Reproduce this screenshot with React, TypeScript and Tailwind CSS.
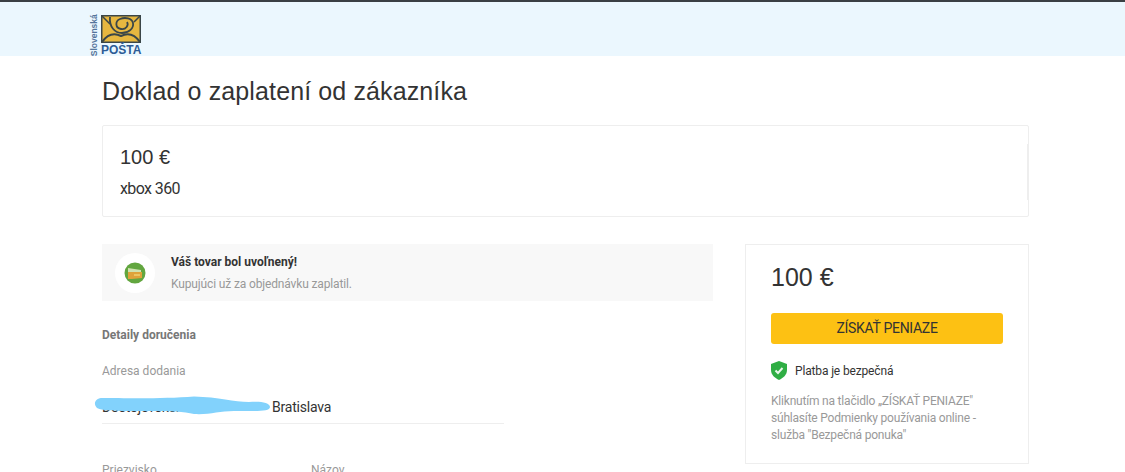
import React from 'react';

const roboto = { fontFamily: 'Roboto, sans-serif' };

const Logo: React.FC = () => (
  <div className="flex h-[42px] w-[52px] items-start gap-[1px]">
    <div className="flex h-[41px] w-[11px] items-center justify-center">
      <span className="-rotate-90 whitespace-nowrap font-['Liberation_Sans',sans-serif] text-[8.5px] font-bold leading-none text-[#55749a]">
        Slovenská
      </span>
    </div>
    <div className="flex w-[41px] flex-col items-start">
      <svg width="40" height="28" viewBox="0 0 40 28">
        <rect x="0.75" y="0.75" width="38.5" height="26.5" fill="#e6b740" stroke="#3a4648" strokeWidth="1.5" />
        <path d="M1 1 L9 9 M39 1 L33 7" stroke="#3a4648" strokeWidth="1.5" fill="none" />
        <path d="M1 27 C6 20 12 17 20 21 C28 17 34 20 39 27" stroke="#3a4648" strokeWidth="2" fill="none" />
        <path d="M9 2 C8 12 14 18 21 18 C28 18 33 13 32 8 C31 3 24 2 19 4 C14 6 14 13 20 14 C25 15 28 10 26 7" stroke="#3a4648" strokeWidth="1.8" fill="none" />
      </svg>
      <span className="mt-[1px] font-['Liberation_Sans',sans-serif] text-[12px] font-bold leading-[12px] text-[#2d5c96]">
        POŠTA
      </span>
    </div>
  </div>
);

const Shield: React.FC = () => (
  <svg width="16" height="19" viewBox="0 0 16 19">
    <path d="M8 0 L16 3 V9 C16 14 12 17 8 19 C4 17 0 14 0 9 V3 Z" fill="#2fae44" />
    <path d="M4.5 9.5 L7 12 L11.5 7" stroke="#e8f7ea" strokeWidth="2" fill="none" />
  </svg>
);

const WalletIcon: React.FC = () => (
  <div className="flex h-10 w-10 items-center justify-center rounded-full bg-white">
    <svg width="22" height="22" viewBox="0 0 22 22">
      <circle cx="11" cy="11" r="10.5" fill="#62a63f" />
      <path d="M4 6 L17 8 V10 H4 Z" fill="#cfe2b0" />
      <path d="M4 10 H18 V16 L8 17 H4 Z" fill="#dfa23a" />
      <path d="M10 13 H16" stroke="#f0d070" strokeWidth="1.5" />
    </svg>
  </div>
);

export default function App() {
  return (
    <div className="h-[472px] overflow-hidden bg-white" style={roboto}>
      {/* Header */}
      <div className="h-[56px] border-t-2 border-[#3a3f44] bg-[#ebf7fe] pl-[89px] pt-[13px]">
        <Logo />
      </div>

      <div className="mx-[102px] w-[927px]">
        <h1 className="mt-[17px] font-['Liberation_Sans',sans-serif] text-[25px] font-normal leading-[36px] tracking-[0.12px] text-[#333]">
          Doklad o zaplatení od zákazníka
        </h1>

        {/* Summary */}
        <div className="relative mt-[16px] h-[92px] rounded-[2px] border border-[#eeeeee] pl-[17px] pt-[17px]">
          <div className="font-['Liberation_Sans',sans-serif] text-[20px] leading-[28px] text-[#333]">100 €</div>
          <div className="mt-[7px] text-[16px] leading-[22px] tracking-[-0.6px] text-[#333]">xbox 360</div>
          <div className="absolute right-[-1px] top-[18px] h-[56px] w-[2px] bg-[#eeeeee]" />
        </div>

        <div className="mt-[27px] flex justify-between">
          {/* Left column */}
          <div className="w-[611px]">
            <div className="flex h-[57px] items-center gap-4 bg-[#f8f8f8] pl-[13px]">
              <WalletIcon />
              <div className="pt-[1px]">
                <div className="text-[12px] font-bold leading-[20px] text-[#333]">Váš tovar bol uvoľnený!</div>
                <div className="mt-[2px] text-[12px] leading-[20px] tracking-[-0.14px] text-[#999]">Kupujúci už za objednávku zaplatil.</div>
              </div>
            </div>

            <div className="mt-[24px] text-[12px] font-bold leading-[20px] text-[#777]">Detaily doručenia</div>
            <div className="mt-[16px] text-[12px] leading-[20px] text-[#999]">Adresa dodania</div>

            <div className="relative mt-[14px] h-[29px] w-[402px] border-b border-[#eeeeee] text-[14px] leading-[24px] tracking-[-0.2px] text-[#333]">
              <span className="absolute left-0 top-0">Dostojevského</span>
              <span className="absolute left-[170px] top-0">Bratislava</span>
              <svg className="absolute left-[-8px] top-[1px]" width="178" height="20" viewBox="0 0 178 20">
                <path
                  d="M7 2 C30 2 70 3 100 0.5 C125 1 140 6 155 6 C165 5 176 6 176 11 C176 16 160 15 140 15 C125 15 115 19 100 18 C85 14 60 15 40 15 C25 15 8 15 3 12 C-1 8 1 3 7 2 Z"
                  fill="#82d2fc"
                />
              </svg>
            </div>

            <div className="mt-[36px] flex text-[12px] leading-[20px] text-[#999]">
              <div className="w-[209px]">Priezvisko</div>
              <div>Názov</div>
            </div>
          </div>

          {/* Right column */}
          <div className="h-[220px] w-[284px] border border-[#eeeeee] px-[25px]">
            <div className="mt-[15px] font-['Liberation_Sans',sans-serif] text-[25px] leading-[34px] text-[#333]">100 €</div>
            <button className="mt-[19px] block h-[31px] w-[232px] rounded-[3px] bg-[#fdc113] text-[14px] tracking-[-0.3px] text-[#333]">
              ZÍSKAŤ PENIAZE
            </button>
            <div className="mt-[17px] flex items-center gap-[8px]">
              <Shield />
              <span className="text-[12px] tracking-[-0.15px] text-[#333]">Platba je bezpečná</span>
            </div>
            <p className="mt-[13px] text-[12px] leading-[17px] tracking-[-0.2px] text-[#999]">
              Kliknutím na tlačidlo „ZÍSKAŤ PENIAZE" súhlasíte Podmienky používania online - služba "Bezpečná ponuka"
            </p>
          </div>
        </div>
      </div>
    </div>
  );
}
